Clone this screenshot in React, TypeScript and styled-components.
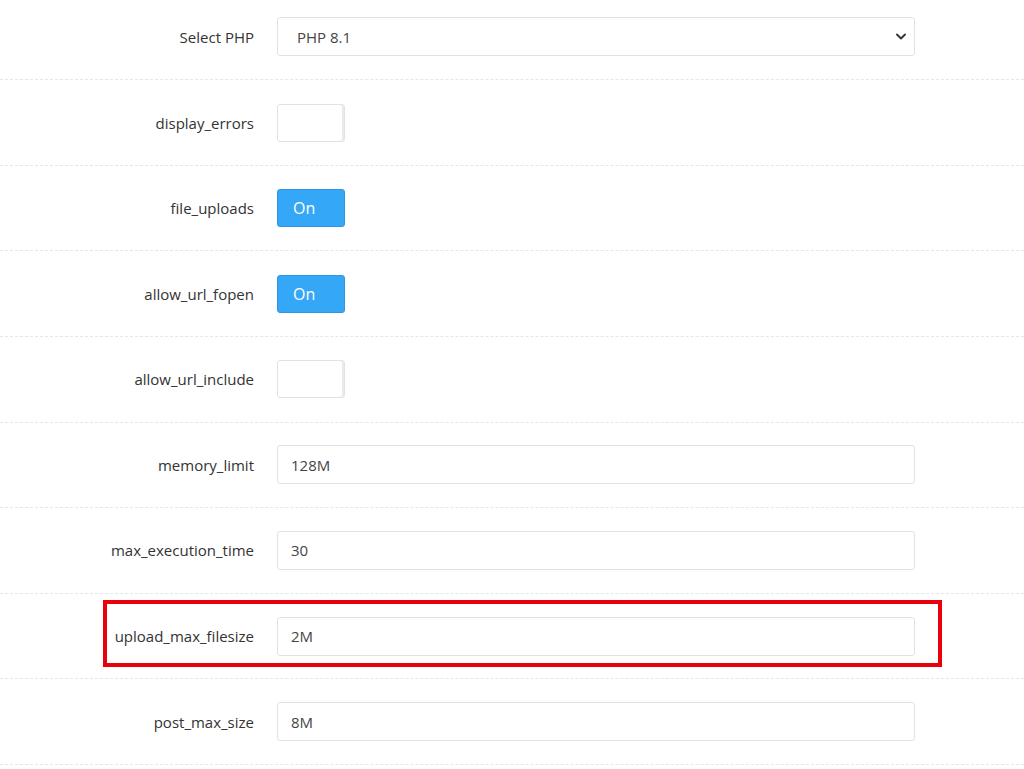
import React from "react";
import styled, { createGlobalStyle } from "styled-components";

const GlobalStyle = createGlobalStyle`
  html, body {
    margin: 0;
    padding: 0;
    background: #ffffff;
    overflow: hidden;
  }
  body {
    font-family: "Open Sans", "Liberation Sans", sans-serif;
    color: #333333;
  }
`;

type Field =
  | { name: string; kind: "select"; value: string }
  | { name: string; kind: "toggle"; on: boolean }
  | { name: string; kind: "text"; value: string; marked?: boolean };

const fields: Field[] = [
  { name: "Select PHP", kind: "select", value: "PHP 8.1" },
  { name: "display_errors", kind: "toggle", on: false },
  { name: "file_uploads", kind: "toggle", on: true },
  { name: "allow_url_fopen", kind: "toggle", on: true },
  { name: "allow_url_include", kind: "toggle", on: false },
  { name: "memory_limit", kind: "text", value: "128M" },
  { name: "max_execution_time", kind: "text", value: "30" },
  { name: "upload_max_filesize", kind: "text", value: "2M", marked: true },
  { name: "post_max_size", kind: "text", value: "8M" },
];

const App = () => {
  return (
    <>
      <GlobalStyle />
      <Form>
        {fields.map((f) => (
          <Row key={f.name} marked={f.kind === "text" && !!f.marked}>
            <Label>{f.name}</Label>
            {f.kind === "select" && (
              <SelectBox>
                <span>{f.value}</span>
                <Chevron viewBox="0 0 10 6">
                  <path
                    d="M1 1l4 4 4-4"
                    fill="none"
                    stroke="#333"
                    strokeWidth="1.8"
                    strokeLinecap="round"
                    strokeLinejoin="round"
                  />
                </Chevron>
              </SelectBox>
            )}
            {f.kind === "toggle" && (
              <Toggle on={f.on}>{f.on ? "On" : ""}</Toggle>
            )}
            {f.kind === "text" && <TextInput>{f.value}</TextInput>}
          </Row>
        ))}
      </Form>
    </>
  );
};

export default App;

const Form = styled.div`
  margin-top: -5.4px;
  width: 1024px;
`;

interface RowProps {
  marked?: boolean;
}
const Row = styled.div<RowProps>`
  position: relative;
  box-sizing: border-box;
  height: 85.6px;
  display: grid;
  grid-template-columns: 254px 638px;
  column-gap: 23px;
  align-items: center;
  border-bottom: 1px dashed #e3e6ea;

  &::after {
    content: "";
    display: ${({ marked }) => (marked ? "block" : "none")};
    position: absolute;
    left: 103px;
    top: 6.4px;
    width: 839px;
    height: 67px;
    box-sizing: border-box;
    border: 4px solid #e8000b;
    pointer-events: none;
  }
`;

const Label = styled.div`
  text-align: right;
  font-size: 15px;
  line-height: 20px;
  color: #333333;
`;

const Field = styled.div`
  box-sizing: border-box;
  height: 39px;
  border: 1px solid #dfe3e8;
  border-radius: 3px;
  background: #ffffff;
  display: flex;
  align-items: center;
  font-size: 15px;
  color: #454545;
`;

const SelectBox = styled(Field)`
  justify-content: space-between;
  padding: 0 8px 0 19px;
`;

const Chevron = styled.svg`
  width: 10px;
  height: 7px;
`;

const TextInput = styled(Field)`
  padding: 0 13px;
`;

interface ToggleProps {
  on: boolean;
}
const Toggle = styled.div<ToggleProps>`
  box-sizing: border-box;
  width: 68px;
  height: 38px;
  border-radius: 3px;
  display: flex;
  align-items: center;
  padding-left: 15px;
  font-size: 16px;
  color: #ffffff;
  background: ${({ on }) => (on ? "#35a7f7" : "#ffffff")};
  border: 1px solid ${({ on }) => (on ? "#2d97e2" : "#dfe3e8")};
  box-shadow: ${({ on }) => (on ? "none" : "inset -2px 0 0 #e7eaee")};
`;
